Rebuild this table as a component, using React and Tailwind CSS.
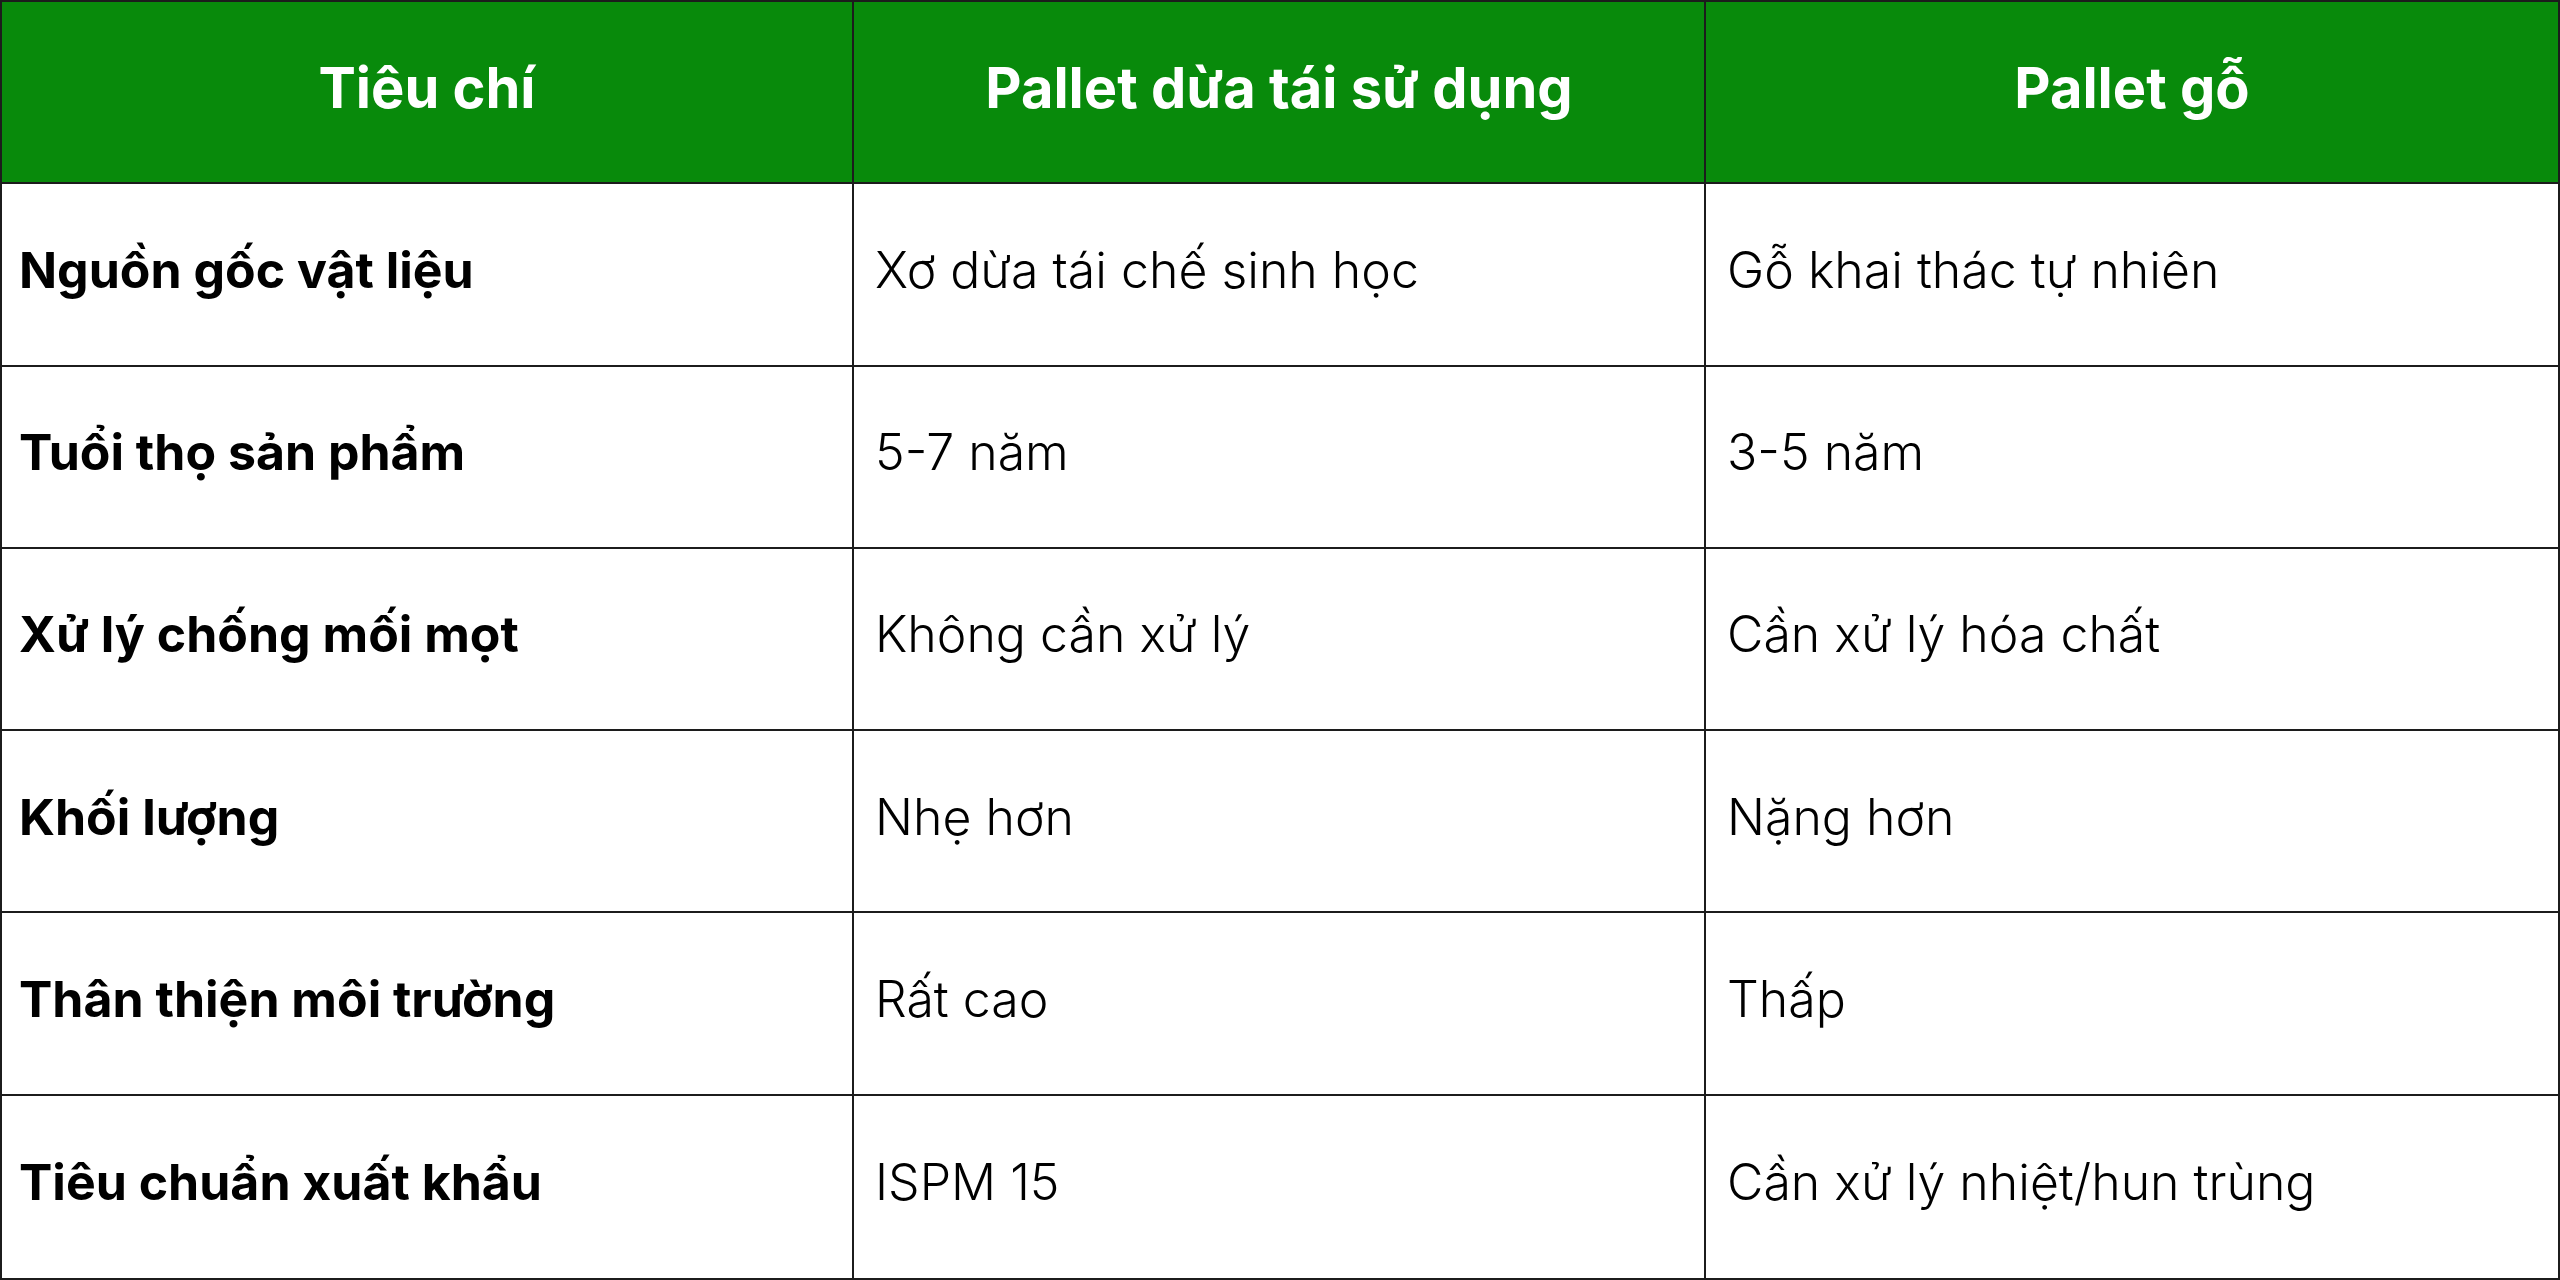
const rows = [
  ['Nguồn gốc vật liệu', 'Xơ dừa tái chế sinh học', 'Gỗ khai thác tự nhiên'],
  ['Tuổi thọ sản phẩm', '5-7 năm', '3-5 năm'],
  ['Xử lý chống mối mọt', 'Không cần xử lý', 'Cần xử lý hóa chất'],
  ['Khối lượng', 'Nhẹ hơn', 'Nặng hơn'],
  ['Thân thiện môi trường', 'Rất cao', 'Thấp'],
  ['Tiêu chuẩn xuất khẩu', 'ISPM 15', 'Cần xử lý nhiệt/hun trùng'],
];

const headers = ['Tiêu chí', 'Pallet dừa tái sử dụng', 'Pallet gỗ'];

export default function App() {
  return (
    <div
      className="w-[2560px] h-[1280px] bg-white text-black border-2 border-[#1c1c1c] grid grid-cols-3 grid-rows-7 overflow-hidden"
      style={{ fontFamily: 'Inter, "Noto Sans", sans-serif' }}
    >
      {/* Header */}
      {headers.map((h, i) => (
        <div
          key={h}
          className={`bg-[#088a0b] flex items-center justify-center pb-[8px] text-white font-bold text-[56px] border-b-2 border-[#1c1c1c] ${i < 2 ? 'border-r-2' : ''}`}
        >
          {h}
        </div>
      ))}

      {/* Body */}
      {rows.map((row, r) =>
        row.map((cell, c) => (
          <div
            key={`${r}-${c}`}
            className={`flex items-center pb-[8px] text-[50px] border-[#1c1c1c] ${r < rows.length - 1 ? 'border-b-2' : ''} ${c < 2 ? 'border-r-2' : ''} ${c === 0 ? 'font-bold pl-[17px]' : 'font-light pl-[21px]'}`}
          >
            {cell}
          </div>
        ))
      )}
    </div>
  );
}
